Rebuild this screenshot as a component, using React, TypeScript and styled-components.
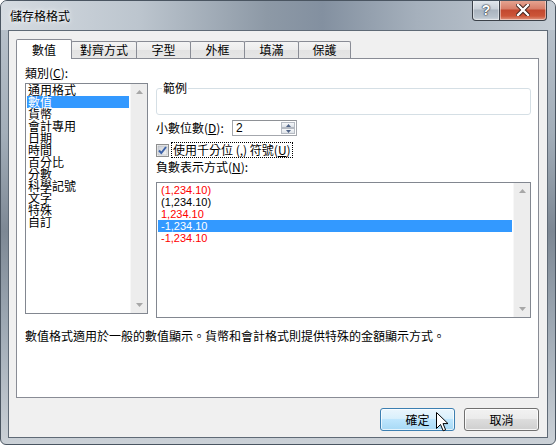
import React from 'react';
import styled, { createGlobalStyle } from 'styled-components';

const GlobalStyle = createGlobalStyle`
  html, body { margin: 0; padding: 0; background: #ffffff; }
  body {
    font-family: "Noto Sans CJK TC", "Noto Sans", sans-serif;
    font-size: 12px;
    color: #000;
  }
  * { box-sizing: border-box; }
`;

const CJK = `"Noto Sans CJK TC", "Noto Sans", sans-serif`;
const LATIN = `"Liberation Sans", "Noto Sans CJK TC", sans-serif`;

const Window = styled.div`
  position: relative;
  width: 556px;
  height: 445px;
  border: 1px solid #4a5561;
  border-radius: 7px 7px 6px 6px;
  overflow: hidden;
  display: flex;
  flex-direction: column;
  background: linear-gradient(
    to bottom,
    #bcc5ce 0%,
    #a3aeb9 30%,
    #7d8894 52%,
    #9ca7b2 72%,
    #cbd1d7 100%
  );
`;

const TitleBar = styled.div`
  height: 29px;
  flex: none;
  display: flex;
  align-items: flex-start;
  background: linear-gradient(
    to right,
    #d5dbe1 0%,
    #bcc5ce 25%,
    #8d99a6 48%,
    #8390a0 58%,
    #a5b0bc 75%,
    #c5cdd5 100%
  );
`;

const Title = styled.div`
  padding: 8px 0 0 9px;
  font-family: ${CJK};
  font-size: 12px;
  line-height: 14px;
  color: #000;
  text-shadow: 0 0 6px rgba(255, 255, 255, 0.95), 0 0 3px rgba(255, 255, 255, 0.9);
`;

const CaptionButtons = styled.div`
  margin-left: auto;
  margin-right: 8px;
  margin-top: -1px;
  display: flex;
`;

const CaptionButton = styled.div<{ $kind: 'help' | 'close' }>`
  height: 21px;
  width: ${(p) => (p.$kind === 'help' ? '28px' : '47px')};
  border: 1px solid #3b4149;
  border-top: none;
  border-left: ${(p) => (p.$kind === 'help' ? '1px solid #3b4149' : 'none')};
  border-radius: ${(p) => (p.$kind === 'help' ? '0 0 0 4px' : '0 0 4px 0')};
  display: flex;
  align-items: center;
  justify-content: center;
  box-shadow: inset 0 0 0 1px rgba(255, 255, 255, 0.45);
  background: ${(p) =>
    p.$kind === 'help'
      ? 'linear-gradient(to bottom, #e4e9ee 0%, #c9d0d8 45%, #aab4bf 50%, #b8c2cc 85%, #d2d8de 100%)'
      : 'linear-gradient(to bottom, #e7a895 0%, #d77d68 45%, #c2482f 50%, #cc5538 80%, #e0957f 100%)'};
`;

const HelpGlyph = styled.span`
  font-family: "Liberation Sans", sans-serif;
  font-weight: bold;
  font-size: 14px;
  line-height: 14px;
  color: #ffffff;
  text-shadow: 0 0 1px #2f3640, 0 0 1px #2f3640, 0 0 2px #2f3640;
`;

const Client = styled.div`
  flex: 1;
  margin: 0 7px 6px 7px;
  border: 1px solid #5f6a76;
  background: #f0f0f0;
  display: flex;
  flex-direction: column;
  padding: 8px 8px 6px 7px;
`;

const TabStrip = styled.div`
  height: 19px;
  display: flex;
  align-items: flex-end;
  position: relative;
  z-index: 1;
`;

const Tab = styled.div<{ $active?: boolean; $w: number }>`
  width: ${(p) => p.$w}px;
  height: ${(p) => (p.$active ? '20px' : '17px')};
  margin-bottom: ${(p) => (p.$active ? '-1px' : '0')};
  margin-left: -1px;
  border: 1px solid #898c95;
  border-bottom: none;
  border-radius: 2px 2px 0 0;
  background: ${(p) =>
    p.$active ? '#ffffff' : 'linear-gradient(to bottom, #f4f4f4 0%, #ececec 50%, #e2e2e2 51%, #e6e6e6 100%)'};
  display: flex;
  justify-content: center;
  align-items: ${(p) => (p.$active ? 'center' : 'flex-end')};
  padding-bottom: ${(p) => (p.$active ? '0' : '2px')};
  font-family: ${CJK};
  font-size: 12px;
  line-height: 12px;
  position: relative;
  z-index: ${(p) => (p.$active ? 2 : 1)};
  &:first-child { margin-left: 0; }
`;

const Panel = styled.div`
  height: 340px;
  width: 523px;
  border: 1px solid #898c95;
  background: #ffffff;
  display: grid;
  grid-template-columns: 123px 376px;
  grid-template-rows: auto auto;
  column-gap: 8px;
  align-content: start;
  padding: 8px 0 0 8px;
`;

const LeftCol = styled.div`
  display: flex;
  flex-direction: column;
`;

const RightCol = styled.div`
  display: flex;
  flex-direction: column;
  padding-top: 15px;
`;

const Label = styled.div<{ $mt?: number }>`
  font-family: ${CJK};
  font-size: 12px;
  line-height: 12px;
  height: 12px;
  white-space: nowrap;
  margin-top: ${(p) => p.$mt ?? 0}px;
`;

const Key = styled.u`
  text-decoration: underline;
  text-underline-offset: 1px;
`;

const ListBox = styled.div<{ $w: number; $h: number; $mt: number }>`
  width: ${(p) => p.$w}px;
  height: ${(p) => p.$h}px;
  margin-top: ${(p) => p.$mt}px;
  border: 1px solid #828790;
  background: #ffffff;
  display: grid;
  grid-template-columns: 1fr 17px;
`;

const Items = styled.div<{ $pad: string }>`
  padding: ${(p) => p.$pad};
`;

const Item = styled.div<{ $sel?: boolean; $red?: boolean; $num?: boolean; $indent: number }>`
  height: 12px;
  line-height: 12px;
  padding-left: ${(p) => p.$indent}px;
  white-space: nowrap;
  font-family: ${(p) => (p.$num ? LATIN : CJK)};
  font-size: ${(p) => (p.$num ? '11px' : '12px')};
  background: ${(p) => (p.$sel ? '#3399ff' : 'transparent')};
  color: ${(p) => (p.$sel ? '#ffffff' : p.$red ? '#ff0000' : '#000000')};
`;

const ScrollBar = styled.div`
  background: #ededed;
  border-left: 1px solid #f7f7f7;
  display: flex;
  flex-direction: column;
  justify-content: space-between;
  align-items: center;
  padding: 6px 0 6px;
`;

const Arrow = ({ down }: { down?: boolean }) => (
  <svg width="7" height="4" viewBox="0 0 7 4">
    <polygon points={down ? '0,0 7,0 3.5,4' : '3.5,0 7,4 0,4'} fill="#a7a7a7" />
  </svg>
);

const GroupBox = styled.fieldset`
  margin: 0;
  padding: 0 5px;
  border: 1px solid #d5dfe5;
  border-radius: 3px;
  min-width: 0;
  width: 375px;
`;

const Legend = styled.legend`
  padding: 0 1px;
  font-family: ${CJK};
  font-size: 12px;
  line-height: 12px;
`;

const GroupBody = styled.div`
  height: 20px;
`;

const Row = styled.div<{ $mt: number }>`
  display: flex;
  align-items: center;
  height: 16px;
  margin-top: ${(p) => p.$mt}px;
`;

const SpinLabel = styled(Label)`
  width: 76px;
`;

const SpinBox = styled.div`
  width: 65px;
  height: 16px;
  border: 1px solid #a4a7ad;
  border-top-color: #8e9196;
  background: #ffffff;
  display: flex;
`;

const SpinValue = styled.div`
  flex: 1;
  font-family: ${LATIN};
  font-size: 12px;
  line-height: 14px;
  padding-left: 3px;
`;

const SpinButtons = styled.div`
  width: 15px;
  display: flex;
  flex-direction: column;
  padding: 1px 1px 1px 0;
  gap: 0;
`;

const SpinBtn = styled.div`
  flex: 1;
  border: 1px solid #b5bac2;
  background: linear-gradient(to bottom, #f6f7f9, #dde2e8);
  display: flex;
  align-items: center;
  justify-content: center;
`;

const CheckLabel = styled.div`
  margin-left: 3px;
  padding: 1px 1px;
  outline: 1px dotted #000;
  outline-offset: 0;
  font-family: ${CJK};
  font-size: 12px;
  line-height: 12px;
  white-space: nowrap;
`;

const Description = styled.div`
  grid-column: 1 / span 2;
  margin-top: 12px;
  font-family: ${CJK};
  font-size: 12px;
  line-height: 12px;
  white-space: nowrap;
`;

const ButtonRow = styled.div`
  margin-top: 10px;
  display: flex;
  justify-content: flex-end;
  gap: 9px;
  padding-right: 0;
  width: 523px;
`;

const DlgButton = styled.div<{ $default?: boolean }>`
  width: 75px;
  height: 23px;
  border-radius: 3px;
  border: 1px solid ${(p) => (p.$default ? '#3c7fb1' : '#707070')};
  box-shadow: inset 0 0 0 1px ${(p) => (p.$default ? 'rgba(255,255,255,0.7)' : 'rgba(255,255,255,0.8)')};
  background: ${(p) =>
    p.$default
      ? 'linear-gradient(to bottom, #eaf6fd 0%, #d9f0fc 45%, #bee6fd 50%, #a7d9f5 100%)'
      : 'linear-gradient(to bottom, #f2f2f2 0%, #ebebeb 45%, #dddddd 50%, #cfcfcf 100%)'};
  display: flex;
  align-items: center;
  justify-content: center;
  font-family: ${CJK};
  font-size: 12px;
  line-height: 12px;
`;

const Cursor = styled.svg`
  position: absolute;
  left: 435px;
  top: 411px;
`;

const categories = ['通用格式', '數值', '貨幣', '會計專用', '日期', '時間', '百分比', '分數', '科學記號', '文字', '特殊', '自訂'];

const negatives: { t: string; red?: boolean; sel?: boolean }[] = [
  { t: '(1,234.10)', red: true },
  { t: '(1,234.10)' },
  { t: '1,234.10', red: true },
  { t: '-1,234.10', sel: true },
  { t: '-1,234.10', red: true },
];

const tabs = [
  { label: '數值', w: 56, active: true },
  { label: '對齊方式', w: 66 },
  { label: '字型', w: 55 },
  { label: '外框', w: 55 },
  { label: '填滿', w: 55 },
  { label: '保護', w: 53 },
];

export default function App() {
  return (
    <>
      <GlobalStyle />
      <Window>
        <TitleBar>
          <Title>儲存格格式</Title>
          <CaptionButtons>
            <CaptionButton $kind="help">
              <HelpGlyph>?</HelpGlyph>
            </CaptionButton>
            <CaptionButton $kind="close">
              <svg width="14" height="12" viewBox="0 0 14 12">
                <path d="M2 1 L12 11 M12 1 L2 11" stroke="#3a1d18" strokeWidth="4.2" strokeLinecap="square" />
                <path d="M2 1 L12 11 M12 1 L2 11" stroke="#ffffff" strokeWidth="2.4" strokeLinecap="square" />
              </svg>
            </CaptionButton>
          </CaptionButtons>
        </TitleBar>
        <Client>
          <TabStrip>
            {tabs.map((t) => (
              <Tab key={t.label} $active={t.active} $w={t.w}>
                {t.label}
              </Tab>
            ))}
          </TabStrip>
          <Panel>
            <LeftCol>
              <Label>
                類別(<Key>C</Key>):
              </Label>
              <ListBox $w={123} $h={231} $mt={4}>
                <Items $pad="0 1px">
                  {categories.map((c, i) => (
                    <Item key={c} $sel={i === 1} $indent={1}>
                      {c}
                    </Item>
                  ))}
                </Items>
                <ScrollBar>
                  <Arrow />
                  <Arrow down />
                </ScrollBar>
              </ListBox>
            </LeftCol>
            <RightCol>
              <GroupBox>
                <Legend>範例</Legend>
                <GroupBody />
              </GroupBox>
              <Row $mt={5}>
                <SpinLabel>
                  小數位數(<Key>D</Key>):
                </SpinLabel>
                <SpinBox>
                  <SpinValue>2</SpinValue>
                  <SpinButtons>
                    <SpinBtn>
                      <svg width="5" height="3" viewBox="0 0 5 3">
                        <polygon points="2.5,0 5,3 0,3" fill="#4d6185" />
                      </svg>
                    </SpinBtn>
                    <SpinBtn>
                      <svg width="5" height="3" viewBox="0 0 5 3">
                        <polygon points="0,0 5,0 2.5,3" fill="#4d6185" />
                      </svg>
                    </SpinBtn>
                  </SpinButtons>
                </SpinBox>
              </Row>
              <Row $mt={6}>
                <svg width="13" height="13" viewBox="0 0 13 13">
                  <defs>
                    <linearGradient id="cbg" x1="0" y1="0" x2="1" y2="1">
                      <stop offset="0" stopColor="#cbcfd5" />
                      <stop offset="1" stopColor="#f6f6f6" />
                    </linearGradient>
                  </defs>
                  <rect x="0.5" y="0.5" width="12" height="12" fill="#f4f4f4" stroke="#8e8f8f" />
                  <rect x="2" y="2" width="9" height="9" fill="url(#cbg)" stroke="#b0b4bb" strokeWidth="0.6" />
                  <path d="M3 6.5 L5.3 9 L10 3" fill="none" stroke="#3b61a8" strokeWidth="2" />
                </svg>
                <CheckLabel>
                  使用千分位 (,) 符號(<Key>U</Key>)
                </CheckLabel>
              </Row>
              <Label $mt={3}>
                負數表示方式(<Key>N</Key>):
              </Label>
              <ListBox $w={375} $h={136} $mt={9}>
                <Items $pad="1px">
                  {negatives.map((n, i) => (
                    <Item key={i} $num $sel={n.sel} $red={n.red} $indent={3}>
                      {n.t}
                    </Item>
                  ))}
                </Items>
                <ScrollBar>
                  <Arrow />
                  <Arrow down />
                </ScrollBar>
              </ListBox>
            </RightCol>
            <Description>數值格式適用於一般的數值顯示。貨幣和會計格式則提供特殊的金額顯示方式。</Description>
          </Panel>
          <ButtonRow>
            <DlgButton $default>確定</DlgButton>
            <DlgButton>取消</DlgButton>
          </ButtonRow>
        </Client>
        <Cursor width="13" height="21" viewBox="0 0 13 21">
          <path
            d="M0.5 0.5 L0.5 16.5 L4.5 12.5 L7.2 18.8 L9.6 17.8 L7 11.6 L12 11.6 Z"
            fill="#ffffff"
            stroke="#000000"
            strokeWidth="1"
            strokeLinejoin="miter"
          />
        </Cursor>
      </Window>
    </>
  );
}
